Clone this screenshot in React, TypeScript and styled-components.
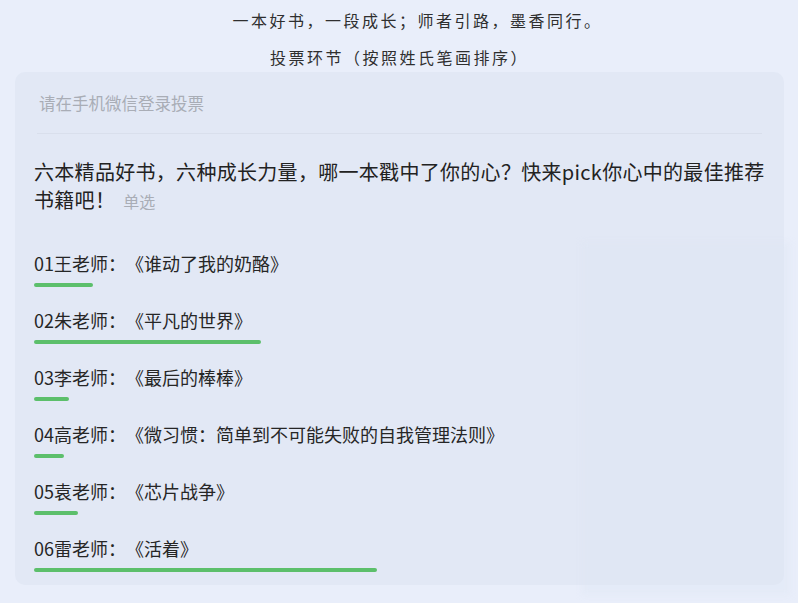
import React from "react";
import styled, { createGlobalStyle } from "styled-components";

const GlobalStyle = createGlobalStyle`
  html, body {
    margin: 0;
    padding: 0;
    background: #e9eefa;
  }
  body {
    font-family: "Noto Sans CJK SC", "Noto Sans", sans-serif;
    color: #2b2b2b;
    text-spacing-trim: space-all;
  }
`;

const Page = styled.div`
  position: relative;
  width: 798px;
  height: 603px;
  overflow: hidden;
  background: #e9eefa;
  padding: 9px 14px 0 15px;
  box-sizing: border-box;
`;

const Header = styled.header`
  display: flex;
  flex-direction: column;
  align-items: center;
  gap: 15px;
`;

const HeaderLine = styled.div<{ $indent?: number }>`
  font-size: 16px;
  line-height: 22px;
  letter-spacing: 2.5px;
  color: #2f2f2f;
  text-align: center;
  padding-left: ${(p) => p.$indent ?? 0}px;
`;

const Card = styled.section`
  margin-top: 4px;
  background: #e2e8f5;
  border-radius: 10px;
  padding: 20px 19px 13px 19px;
`;

const Hint = styled.div`
  padding-left: 5px;
  font-size: 16.5px;
  line-height: 22px;
  color: #a9adb6;
`;

const Divider = styled.hr`
  margin: 19px 3px 0 3px;
  border: none;
  height: 1px;
  background: #d9dfec;
`;

const Question = styled.div`
  margin-top: 24px;
  font-size: 20px;
  line-height: 28px;
  color: #222;
`;

const QuestionText = styled.span`
  letter-spacing: 0.3px;
`;

const Tag = styled.span`
  margin-left: 8px;
  font-size: 16px;
  color: #a9adb6;
`;

const OptionList = styled.ul`
  list-style: none;
  margin: 35px 0 0 0;
  padding: 0;
  display: flex;
  flex-direction: column;
  gap: 20px;
`;

const Option = styled.li`
  display: flex;
  flex-direction: column;
  align-items: flex-start;
`;

const OptionText = styled.div`
  font-size: 18px;
  line-height: 26px;
  color: #262626;
`;

const Bar = styled.div`
  margin-top: 7px;
  height: 4px;
  border-radius: 2px;
  background: #5cbf6b;
`;

const Haze = styled.div`
  position: absolute;
  left: 582px;
  top: 242px;
  width: 208px;
  height: 353px;
  background: rgba(220, 228, 244, 0.35);
  filter: blur(3px);
  pointer-events: none;
`;

const options = [
  { label: "01王老师：《谁动了我的奶酪》", width: 59 },
  { label: "02朱老师：《平凡的世界》", width: 227 },
  { label: "03李老师：《最后的棒棒》", width: 35 },
  { label: "04高老师：《微习惯：简单到不可能失败的自我管理法则》", width: 30 },
  { label: "05袁老师：《芯片战争》", width: 44 },
  { label: "06雷老师：《活着》", width: 343 },
];

export default function App() {
  return (
    <>
      <GlobalStyle />
      <Page lang="zh-CN">
        <Header>
          <HeaderLine $indent={36}>一本好书，一段成长；师者引路，墨香同行。</HeaderLine>
          <HeaderLine>投票环节（按照姓氏笔画排序）</HeaderLine>
        </Header>
        <Card>
          <Hint>请在手机微信登录投票</Hint>
          <Divider />
          <Question>
            <QuestionText>
              六本精品好书，六种成长力量，哪一本戳中了你的心？快来pick你心中的最佳推荐书籍吧！
            </QuestionText>
            <Tag>单选</Tag>
          </Question>
          <OptionList>
            {options.map((o) => (
              <Option key={o.label}>
                <OptionText>{o.label}</OptionText>
                <Bar style={{ width: o.width }} />
              </Option>
            ))}
          </OptionList>
        </Card>
        <Haze />
      </Page>
    </>
  );
}
